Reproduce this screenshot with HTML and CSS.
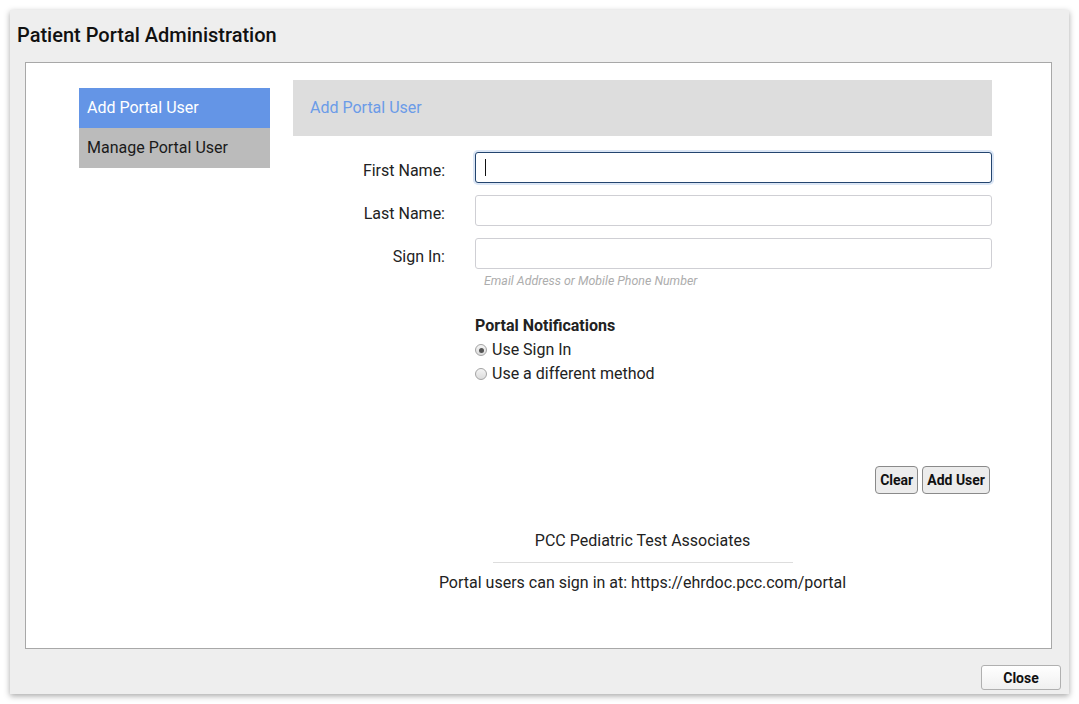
FILE: index.html
```html
<!DOCTYPE html>
<html>
<head>
<meta charset="utf-8">
<link rel="stylesheet" href="styles.css">
</head>
<body>
<div class="dialog">
  <div class="dialog-title">Patient Portal Administration</div>
  <div class="panel">
    <div class="nav">
      <div class="nav-item active">Add Portal User</div>
      <div class="nav-item">Manage Portal User</div>
    </div>
    <div class="main">
      <div class="main-header">Add Portal User</div>
      <div class="form">
        <div class="row">
          <label class="lbl">First Name:</label>
          <div class="field caret-field"><input class="inp focused" type="text"><span class="caret"></span></div>
        </div>
        <div class="row">
          <label class="lbl">Last Name:</label>
          <div class="field"><input class="inp" type="text"></div>
        </div>
        <div class="row">
          <label class="lbl">Sign In:</label>
          <div class="field">
            <input class="inp" type="text">
            <div class="hint">Email Address or Mobile Phone Number</div>
          </div>
        </div>
        <div class="notif">
          <div class="notif-title">Portal Notifications</div>
          <label class="radio-row"><span class="radio checked"></span>Use Sign In</label>
          <label class="radio-row"><span class="radio"></span>Use a different method</label>
        </div>
      </div>
      <div class="actions">
        <button class="btn">Clear</button>
        <button class="btn">Add User</button>
      </div>
      <div class="footer-info">
        <div class="org">PCC Pediatric Test Associates</div>
        <div class="sep"></div>
        <div class="url">Portal users can sign in at: https://ehrdoc.pcc.com/portal</div>
      </div>
    </div>
  </div>
  <div class="dialog-footer">
    <button class="close-btn">Close</button>
  </div>
</div>
</body>
</html>
```

FILE: styles.css
```css
html, body {
  margin: 0;
  padding: 0;
  background: #ffffff;
}
body {
  font-family: Roboto, "Liberation Sans", Arial, sans-serif;
  color: #222;
  padding: 10px 0 0 10px;
  width: 1079px;
  height: 704px;
  box-sizing: border-box;
}
.dialog {
  width: 1059px;
  height: 684px;
  background: #eeeeee;
  box-shadow: 0 2px 6px rgba(0, 0, 0, 0.35);
  display: flex;
  flex-direction: column;
  box-sizing: border-box;
}
.dialog-title {
  height: 52px;
  box-sizing: border-box;
  padding: 13px 0 0 7px;
  font-size: 20px;
  font-weight: 500;
  color: #111;
}
.panel {
  margin: 0 17px 0 15px;
  height: 587px;
  box-sizing: border-box;
  background: #fff;
  border: 1px solid #a8a8a8;
  display: flex;
  padding: 17px 0 0 53px;
  gap: 23px;
}
.nav {
  width: 191px;
  margin-top: 8px;
  display: flex;
  flex-direction: column;
  align-self: flex-start;
}
.nav-item {
  height: 40px;
  line-height: 40px;
  padding-left: 8px;
  font-size: 16px;
  background: #bbbbbb;
  color: #1a1a1a;
}
.nav-item.active {
  background: #6495e6;
  color: #fff;
}
.main {
  width: 699px;
  display: flex;
  flex-direction: column;
}
.main-header {
  height: 56px;
  line-height: 56px;
  background: #dddddd;
  color: #6b9be8;
  font-size: 16px;
  padding-left: 17px;
}
.form {
  padding-top: 16px;
  display: flex;
  flex-direction: column;
  gap: 12px;
}
.row {
  display: flex;
  align-items: flex-start;
  gap: 30px;
}
.lbl {
  width: 152px;
  height: 31px;
  text-align: right;
  font-size: 16px;
  line-height: 37px;
  color: #222;
}
.field {
  width: 517px;
}
.caret-field {
  position: relative;
}
.caret {
  position: absolute;
  left: 10px;
  top: 7px;
  width: 1px;
  height: 17px;
  background: #111;
}
.inp {
  display: block;
  width: 517px;
  height: 31px;
  box-sizing: border-box;
  border: 1px solid #cfcfd4;
  border-radius: 3px;
  background: #fff;
  padding: 0 9px;
  font-family: Roboto, "Liberation Sans", Arial, sans-serif;
  font-size: 15px;
  outline: none;
  margin: 0;
}
.inp.focused {
  border: 1px solid #23456f;
  box-shadow: 0 0 0 2px #dbe6f5;
}
.hint {
  font-size: 12.4px;
  font-style: italic;
  color: #adadad;
  padding: 5px 0 0 9px;
  line-height: 14px;
}
.notif {
  margin-left: 182px;
  margin-top: 15px;
  display: flex;
  flex-direction: column;
}
.notif-title {
  font-size: 16px;
  font-weight: 700;
  color: #222;
  line-height: 22px;
  margin-bottom: 1px;
}
.radio-row {
  display: flex;
  align-items: center;
  font-size: 16px;
  line-height: 24px;
  color: #222;
}
.radio {
  width: 12px;
  height: 12px;
  box-sizing: border-box;
  border: 1px solid #a3a3a3;
  border-radius: 50%;
  background: linear-gradient(#f4f4f4, #dcdcdc);
  margin: 0 5px 0 0;
  position: relative;
}
.radio.checked::after {
  content: "";
  position: absolute;
  left: 2.5px;
  top: 2.5px;
  width: 5px;
  height: 5px;
  border-radius: 50%;
  background: #555;
}
.actions {
  display: flex;
  justify-content: flex-end;
  gap: 4px;
  padding-right: 2px;
  margin-top: 80px;
}
.btn {
  height: 28px;
  box-sizing: border-box;
  padding: 0 4px;
  border: 1px solid #8a8a8a;
  border-radius: 4px;
  background: #ececec;
  font-family: Roboto, "Liberation Sans", Arial, sans-serif;
  font-weight: 700;
  font-size: 14px;
  color: #111;
}
.footer-info {
  margin-top: 35px;
  display: flex;
  flex-direction: column;
  align-items: center;
}
.org {
  font-size: 16px;
  line-height: 24px;
  color: #222;
}
.sep {
  width: 300px;
  height: 1px;
  background: #dddddd;
  margin: 9px 0 8px;
}
.url {
  font-size: 16px;
  line-height: 24px;
  color: #222;
}
.dialog-footer {
  flex: 1;
  display: flex;
  justify-content: flex-end;
  align-items: flex-start;
  padding: 16px 8px 0 0;
}
.close-btn {
  width: 80px;
  height: 25px;
  border: 1px solid #b0b0b0;
  border-radius: 3px;
  background: linear-gradient(#ffffff, #f0f0f0);
  font-family: Roboto, "Liberation Sans", Arial, sans-serif;
  font-weight: 700;
  font-size: 14px;
  color: #111;
}
```
